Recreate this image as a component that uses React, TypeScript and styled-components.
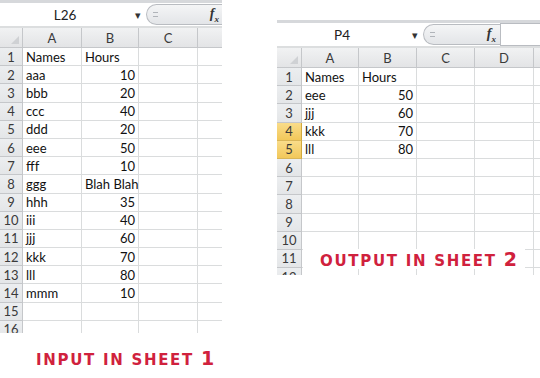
import styled, { createGlobalStyle } from 'styled-components'

type Value = string | number

interface SheetProps {
  nameBox: string
  rowHeaderWidth: number
  colWidths: number[]
  rowCount: number
  rows: Value[][]
  selected?: number[]
  width: number
  height: number
  children?: React.ReactNode
}

const letters = ['A', 'B', 'C', 'D', 'E', 'F']

const inputRows: Value[][] = [
  ['Names', 'Hours'],
  ['aaa', 10],
  ['bbb', 20],
  ['ccc', 40],
  ['ddd', 20],
  ['eee', 50],
  ['fff', 10],
  ['ggg', 'Blah Blah'],
  ['hhh', 35],
  ['iii', 40],
  ['jjj', 60],
  ['kkk', 70],
  ['lll', 80],
  ['mmm', 10],
]

const outputRows: Value[][] = [
  ['Names', 'Hours'],
  ['eee', 50],
  ['jjj', 60],
  ['kkk', 70],
  ['lll', 80],
]

function Sheet({ nameBox, rowHeaderWidth, colWidths, rowCount, rows, selected = [], width, height, children }: SheetProps) {
  const template = [rowHeaderWidth, ...colWidths].map(w => `${w}px`).join(' ')
  return (
    <SheetFrame $width={width} $height={height}>
      <FormulaBar>
        <NameBox>{nameBox}</NameBox>
        <DropArrow>▾</DropArrow>
        <FxArea>
          <Grip />
          <Fx>
            f<sub>x</sub>
          </Fx>
        </FxArea>
        <FormulaInput />
      </FormulaBar>
      <Grid $template={template}>
        <Corner />
        {colWidths.map((_, i) => (
          <ColHeader key={letters[i]}>{letters[i]}</ColHeader>
        ))}
        {Array.from({ length: rowCount }, (_, r) => (
          <Row key={r}>
            <RowHeader $selected={selected.includes(r + 1)}>{r + 1}</RowHeader>
            {colWidths.map((_, c) => {
              const v = rows[r]?.[c]
              return (
                <Cell key={c} $numeric={typeof v === 'number'}>
                  {v}
                </Cell>
              )
            })}
          </Row>
        ))}
      </Grid>
      {children}
    </SheetFrame>
  )
}

function App() {
  return (
    <>
      <GlobalStyle />
      <Page>
        <Column>
          <Sheet
            nameBox="L26"
            rowHeaderWidth={23}
            colWidths={[59, 57, 59, 60]}
            rowCount={16}
            rows={inputRows}
            width={222}
            height={333}
          />
          <Caption>
            INPUT IN SHEET <Digit>1</Digit>
          </Caption>
        </Column>
        <RightColumn>
          <Sheet
            nameBox="P4"
            rowHeaderWidth={25}
            colWidths={[57, 58, 58, 59, 60]}
            rowCount={12}
            rows={outputRows}
            selected={[4, 5]}
            width={263}
            height={255}
          >
            <OverlayCaption>
              OUTPUT IN SHEET <Digit>2</Digit>
            </OverlayCaption>
          </Sheet>
        </RightColumn>
      </Page>
    </>
  )
}

const GlobalStyle = createGlobalStyle`
  html, body {
    margin: 0;
    padding: 0;
    background: #ffffff;
  }
`

const Page = styled.div`
  width: 540px;
  height: 378px;
  display: flex;
  gap: 55px;
  overflow: hidden;
  background: #ffffff;
  font-family: Lato, "Liberation Sans", sans-serif;
`

const Column = styled.div`
  display: flex;
  flex-direction: column;
`

const RightColumn = styled(Column)`
  padding-top: 20px;
`

const SheetFrame = styled.div<{ $width: number; $height: number }>`
  position: relative;
  width: ${p => p.$width}px;
  height: ${p => p.$height}px;
  overflow: hidden;
  flex-shrink: 0;
`

const FormulaBar = styled.div`
  display: flex;
  align-items: center;
  height: 23px;
  border-top: 3px solid #d6d8db;
  border-bottom: 2px solid #dcdedf;
  background: #ffffff;
  width: 600px;
`

const NameBox = styled.div`
  width: 130px;
  text-align: center;
  font-size: 13.5px;
  color: #222;
`

const DropArrow = styled.div`
  width: 16px;
  font-size: 11px;
  color: #333;
  text-align: center;
`

const FxArea = styled.div`
  display: flex;
  align-items: center;
  justify-content: space-between;
  width: 77px;
  height: 21px;
  padding: 0 4px 0 6px;
  box-sizing: border-box;
  border: 1px solid #b9bcc1;
  border-right: none;
  border-radius: 11px 0 0 11px;
  background: linear-gradient(#f4f5f6, #e3e5e8);
`

const Grip = styled.div`
  width: 5px;
  height: 3px;
  border-top: 1px solid #b0b4b9;
  border-bottom: 1px solid #b0b4b9;
`

const Fx = styled.span`
  font-family: "Liberation Serif", serif;
  font-style: italic;
  font-weight: bold;
  font-size: 14px;
  color: #333;

  sub {
    font-size: 9px;
  }
`

const FormulaInput = styled.div`
  flex: 1;
  height: 21px;
  border: 1px solid #b9bcc1;
  background: #ffffff;
`

const Grid = styled.div<{ $template: string }>`
  display: grid;
  grid-template-columns: ${p => p.$template};
  grid-template-rows: 20px;
  grid-auto-rows: 18.2px;
  font-size: 13px;
  color: #111;
`

const Row = styled.div`
  display: contents;
`

const HeaderBase = styled.div`
  box-sizing: border-box;
  display: flex;
  align-items: center;
  justify-content: center;
  color: #3a3a3a;
  background: linear-gradient(#f1f2f3, #e3e4e6);
  border-right: 1px solid #c5c7ca;
  border-bottom: 1px solid #c5c7ca;
`

const Corner = styled(HeaderBase)`
  position: relative;

  &::after {
    content: '';
    position: absolute;
    right: 3px;
    bottom: 3px;
    border-left: 8px solid transparent;
    border-bottom: 8px solid #cfd1d4;
  }
`

const ColHeader = styled(HeaderBase)``

const RowHeader = styled(HeaderBase)<{ $selected: boolean }>`
  background: ${p => (p.$selected ? 'linear-gradient(#f9dc8a, #f2c85a)' : 'linear-gradient(#eceef0, #e4e6e8)')};
  border-right-color: ${p => (p.$selected ? '#d1a93e' : '#c5c7ca')};
  border-bottom-color: ${p => (p.$selected ? '#d9b658' : '#c5c7ca')};
`

const Cell = styled.div<{ $numeric: boolean }>`
  box-sizing: border-box;
  display: flex;
  align-items: center;
  justify-content: ${p => (p.$numeric ? 'flex-end' : 'flex-start')};
  padding: 0 3px;
  white-space: nowrap;
  border-right: 1px solid #dadcdd;
  border-bottom: 1px solid #dadcdd;
  background: #ffffff;
`

const Caption = styled.div`
  margin-top: 14px;
  padding-left: 36px;
  font-family: "DejaVu Sans", sans-serif;
  font-weight: bold;
  font-size: 15px;
  letter-spacing: 1.7px;
  color: #d0213d;
  white-space: nowrap;
`

const OverlayCaption = styled(Caption)`
  position: absolute;
  left: 26px;
  top: 229px;
  margin: 0;
  padding: 0 6px 0 17px;
  height: 20px;
  line-height: 20px;
  background: #ffffff;
`

const Digit = styled.span`
  font-size: 19px;
`

export default App
